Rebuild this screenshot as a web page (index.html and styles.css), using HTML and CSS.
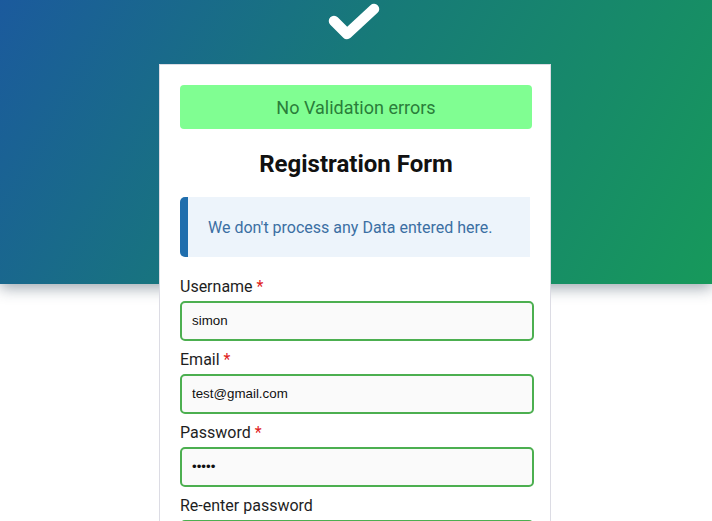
FILE: index.html
```html
<!DOCTYPE html>
<html>
<head>
<meta charset="utf-8">
<link rel="stylesheet" href="styles.css">
</head>
<body>
<header class="hero">
  <svg class="check" width="54" height="40" viewBox="0 0 54 40">
    <polyline points="6,18 19,31 46,6" fill="none" stroke="#fff" stroke-width="10.5" stroke-linecap="round" stroke-linejoin="round"/>
  </svg>
</header>
<main class="card">
  <div class="alert-ok">No Validation errors</div>
  <h1 class="title">Registration Form</h1>
  <div class="info">We don't process any Data entered here.</div>
  <form class="form">
    <label class="label">Username <span class="req">*</span></label>
    <input class="field" type="text" value="simon">
    <label class="label">Email <span class="req">*</span></label>
    <input class="field" type="text" value="test@gmail.com">
    <label class="label">Password <span class="req">*</span></label>
    <input class="field" type="password" value="simon">
    <label class="label">Re-enter password</label>
    <input class="field" type="password" value="simon">
  </form>
</main>
</body>
</html>
```
FILE: styles.css
```css
html, body {
  margin: 0;
  padding: 0;
  background: #fff;
  overflow: hidden;
}
body {
  font-family: Roboto, "Liberation Sans", sans-serif;
}
.hero {
  height: 284px;
  background: linear-gradient(120deg, #1b5a9d 0%, #177a78 45%, #17995b 100%);
  box-shadow: 0 4px 14px rgba(40, 60, 80, 0.45);
  display: flex;
  justify-content: center;
  align-items: flex-start;
  padding-top: 3px;
  box-sizing: border-box;
}
.check {
  display: block;
  margin-right: 3px;
}
.card {
  position: relative;
  z-index: 1;
  margin: -220px 0 0 159px;
  width: 392px;
  box-sizing: border-box;
  background: #fff;
  border: 1px solid #dcdce4;
  padding: 20px 20px 40px 20px;
  min-height: 600px;
}
.alert-ok {
  width: 352px;
  height: 44px;
  box-sizing: border-box;
  background: #80fe92;
  color: #2a7d3a;
  border-radius: 4px;
  font-size: 18px;
  display: flex;
  align-items: center;
  justify-content: center;
}
.title {
  margin: 18px 0 0 0;
  height: 34px;
  line-height: 34px;
  text-align: center;
  font-size: 24px;
  font-weight: 700;
  color: #111;
  width: 352px;
}
.info {
  margin-top: 16px;
  width: 350px;
  height: 60px;
  box-sizing: border-box;
  background: #edf4fb;
  border-left: 8px solid #1f6ead;
  border-radius: 5px 0 0 5px;
  padding-left: 20px;
  display: flex;
  align-items: center;
  color: #3b6fa3;
  font-size: 16px;
}
.form {
  margin-top: 20px;
  display: flex;
  flex-direction: column;
}
.label {
  font-size: 16px;
  line-height: 19px;
  color: #1e1e1e;
  margin-bottom: 5px;
}
.req {
  color: #e02020;
}
.field {
  width: 354px;
  height: 40px;
  box-sizing: border-box;
  border: 2px solid #4caf50;
  border-radius: 5px;
  background: #fafafa;
  padding: 0 10px 1px 10px;
  font-family: "Liberation Sans", Arial, sans-serif;
  font-size: 13.33px;
  color: #111;
  margin: 0 0 9px 0;
  outline: none;
}
```
